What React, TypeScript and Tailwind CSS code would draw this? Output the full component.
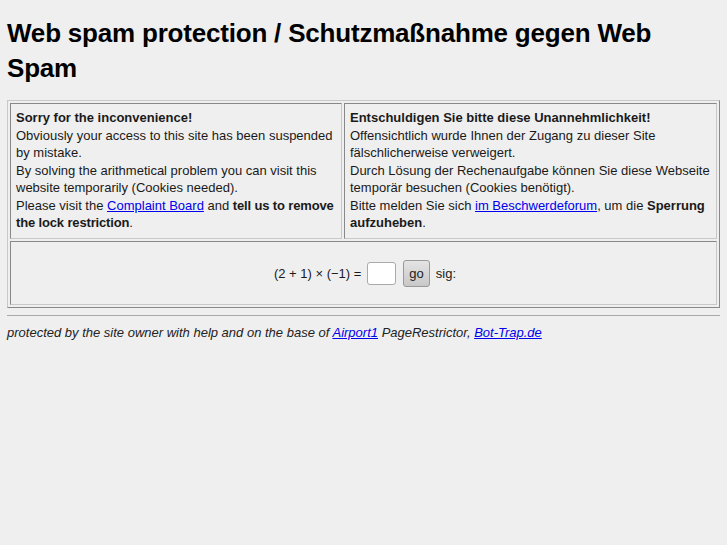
const cell =
  "border border-t-[#888] border-l-[#888] border-r-[#c8c8c8] border-b-[#c8c8c8]";

export default function App() {
  return (
    <div className="min-h-[545px] bg-[#efefef] px-[7px] py-px text-[13px] leading-[17.5px] text-[#1a1a1a] [font-family:'Liberation_Sans',Arial,sans-serif]">
      <h1 className="mt-[15px] mb-[14px] text-[26px] leading-[35px] tracking-[-0.2px] font-bold text-black">
        Web spam protection / Schutzmaßnahme gegen Web Spam
      </h1>
      <table className="w-full border-separate border-spacing-[2px] border border-t-[#c8c8c8] border-l-[#c8c8c8] border-r-[#888] border-b-[#888]">
        <tbody>
          <tr>
            <td className={`w-[332px] align-top pl-[5px] pr-[2px] pt-[5px] pb-[6px] ${cell}`}>
              <b>Sorry for the inconvenience!</b>
              <br />
              Obviously your access to this site has been suspended by mistake.
              <br />
              By solving the arithmetical problem you can visit this website temporarily (Cookies needed).
              <br />
              Please visit the{" "}
              <a href="#" className="text-[#0000ee] underline">
                Complaint Board
              </a>{" "}
              and <b className="tracking-[-0.15px]">tell us to remove the lock restriction</b>.
            </td>
            <td className={`align-top px-[5px] pt-[5px] pb-[6px] ${cell}`}>
              <b>Entschuldigen Sie bitte diese Unannehmlichkeit!</b>
              <br />
              Offensichtlich wurde Ihnen der Zugang zu dieser Site fälschlicherweise verweigert.
              <br />
              Durch Lösung der Rechenaufgabe können Sie diese Webseite temporär besuchen (Cookies benötigt).
              <br />
              Bitte melden Sie sich{" "}
              <a href="#" className="text-[#0000ee] underline">
                im Beschwerdeforum
              </a>
              , um die <b>Sperrung aufzuheben</b>.
            </td>
          </tr>
          <tr>
            <td colSpan={2} className={`h-[64px] text-center align-middle ${cell}`}>
              <span className="inline-flex items-center gap-[6px] pl-[3px] pt-[2px]">
                <span>(2 + 1) × (−1) =</span>
                <input
                  type="text"
                  className="w-[29px] h-[23px] rounded-[3px] border border-[#aaa] bg-white"
                />
                <button className="ml-[1px] h-[27px] px-[5px] rounded-[3px] border border-[#999] bg-gradient-to-b from-[#e4e4e4] to-[#c8c8c8] text-[13px] text-[#222]">
                  go
                </button>
                <span>sig:</span>
              </span>
            </td>
          </tr>
        </tbody>
      </table>
      <hr className="mt-[7px] border-0 border-t border-t-[#aaa]" />
      <p className="mt-[8px] italic text-[#222]">
        protected by the site owner with help and on the base of{" "}
        <a href="#" className="text-[#0000ee] underline">
          Airport1
        </a>{" "}
        PageRestrictor,{" "}
        <a href="#" className="text-[#0000ee] underline">
          Bot-Trap.de
        </a>
      </p>
    </div>
  );
}
